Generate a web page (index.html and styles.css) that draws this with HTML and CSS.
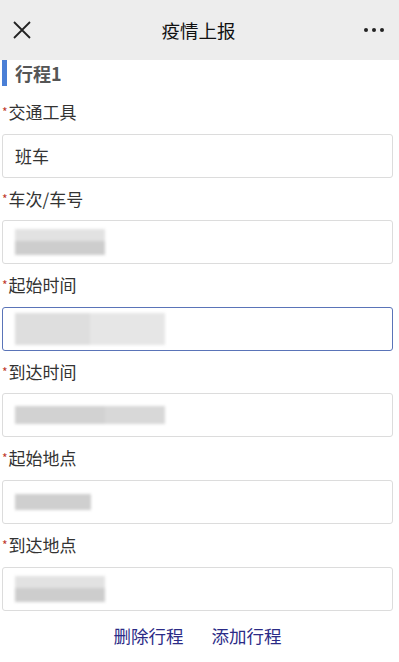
FILE: index.html
```html
<!DOCTYPE html>
<html lang="zh-CN">
<head>
	<meta charset="UTF-8">
	<title>疫情上报</title>
	<link rel="stylesheet" href="styles.css">
</head>
<body>
	<div class="topbar">
		<svg class="close" width="18" height="18" viewBox="0 0 18 18">
			<path d="M1 1L17 17M17 1L1 17" stroke="#222" stroke-width="1.8" fill="none"/>
		</svg>
		<div class="title">疫情上报</div>
		<div class="more"><i></i><i></i><i></i></div>
	</div>

	<div class="trip">
		<div class="trip-head">行程1</div>

		<div class="label first"><em>*</em>交通工具</div>
		<div class="field">班车</div>

		<div class="label"><em>*</em>车次/车号</div>
		<div class="field"><span class="blur b1"></span></div>

		<div class="label"><em>*</em>起始时间</div>
		<div class="field focus"><span class="blur b2"></span></div>

		<div class="label"><em>*</em>到达时间</div>
		<div class="field"><span class="blur b3"></span></div>

		<div class="label"><em>*</em>起始地点</div>
		<div class="field"><span class="blur b4"></span></div>

		<div class="label"><em>*</em>到达地点</div>
		<div class="field"><span class="blur b1"></span></div>
	</div>

	<div class="actions">
		<a href="#">删除行程</a>
		<a href="#">添加行程</a>
	</div>
</body>
</html>
```

FILE: styles.css
```css
html,
body {
	margin: 0;
	padding: 0;
	background: #fff;
	font-family: "Noto Sans CJK SC", "Noto Sans", sans-serif;
}

.topbar {
	height: 60px;
	background: #ededed;
	display: flex;
	align-items: center;
	padding: 0 13px;
	box-sizing: border-box;
}

.close {
	width: 18px;
	height: 18px;
}

.title {
	flex: 1;
	text-align: center;
	font-size: 18.5px;
	color: #111;
	padding-left: 2px;
}

.more {
	display: flex;
	gap: 4px;
	width: 22px;
}

.more i {
	width: 4px;
	height: 4px;
	border-radius: 50%;
	background: #222;
}

.trip {
	padding: 0 6px 0 2px;
}

.trip-head {
	height: 26px;
	line-height: 26px;
	border-left: 5px solid #4a7fd6;
	padding-left: 8px;
	font-size: 18px;
	font-weight: bold;
	color: #555;
}

.label {
	height: 42.6px;
	line-height: 42.6px;
	font-size: 17px;
	color: #333;
}

.label.first {
	margin-top: 5px;
}

.label em {
	font-style: normal;
	font-size: 12px;
	color: #c0392b;
	vertical-align: 2px;
	margin-right: 1px;
}

.field {
	height: 44px;
	border: 1px solid #dcdcdc;
	border-radius: 3px;
	box-sizing: border-box;
	padding: 0 12px;
	display: flex;
	align-items: center;
	font-size: 17px;
	color: #333;
}

.field.focus {
	border-color: #5a74b8;
}

.blur {
	display: block;
	filter: blur(1.5px);
}

.b1 {
	width: 90px;
	height: 26px;
	background: linear-gradient(#e2e2e2 0 45%, #cdcdcd 45% 100%);
}

.b2 {
	width: 150px;
	height: 32px;
	background: linear-gradient(90deg, #dedede 0 50%, #e6e6e6 50% 100%);
}

.b3 {
	width: 150px;
	height: 18px;
	background: linear-gradient(90deg, #d2d2d2 0 60%, #d8d8d8 60% 100%);
}

.b4 {
	width: 76px;
	height: 16px;
	background: #cfcfcf;
}

.actions {
	height: 50px;
	display: flex;
	justify-content: center;
	align-items: center;
	gap: 28px;
	padding-right: 4px;
}

.actions a {
	font-size: 17.5px;
	color: #2b2b86;
	text-decoration: none;
}
```
